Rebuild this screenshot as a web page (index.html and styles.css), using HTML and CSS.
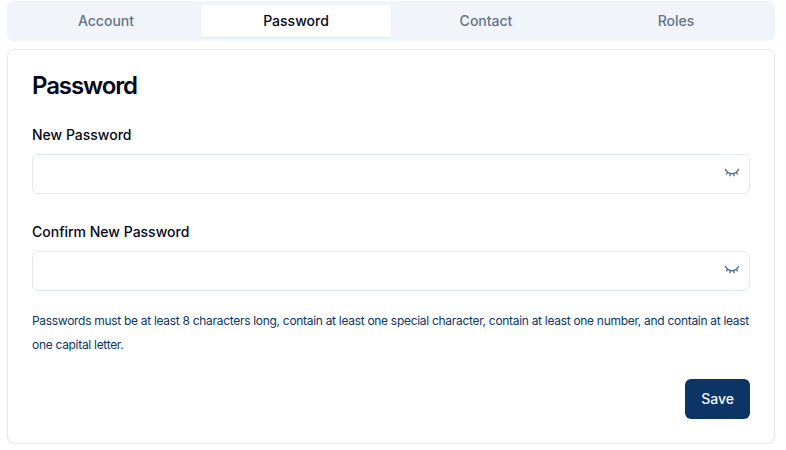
FILE: index.html
```html
<!DOCTYPE html>
<html lang="en">
<head>
  <meta charset="UTF-8">
  <title>Account Settings</title>
  <link rel="stylesheet" href="styles.css">
</head>
<body>
  <div class="settings">
    <div class="tabs">
      <button type="button" class="tab">Account</button>
      <button type="button" class="tab active">Password</button>
      <button type="button" class="tab">Contact</button>
      <button type="button" class="tab">Roles</button>
    </div>

    <form class="card">
      <h3>Password</h3>

      <div class="field">
        <label for="newPassword">New Password</label>
        <div class="input-wrap">
          <input type="password" id="newPassword">
          <svg class="eye" viewBox="0 0 16 16"><use href="#eyeClosed"/></svg>
        </div>
      </div>

      <div class="field">
        <label for="confirmPassword">Confirm New Password</label>
        <div class="input-wrap">
          <input type="password" id="confirmPassword">
          <svg class="eye" viewBox="0 0 16 16"><use href="#eyeClosed"/></svg>
        </div>
      </div>

      <p class="hint">Passwords must be at least 8 characters long, contain at least one special character, contain at least one number, and contain at least one capital letter.</p>

      <div class="actions">
        <button type="button" class="btn">Save</button>
      </div>
    </form>
  </div>

  <!-- Shared icon -->
  <svg class="icons">
    <symbol id="eyeClosed" viewBox="0 0 16 16">
      <g fill="none" stroke="currentColor" stroke-width="1.4" stroke-linecap="round">
        <path d="M1.4 7.4C2.9 10.1 5.2 11.8 8 11.8S13.1 10.1 14.6 7.4"/>
        <path d="M3.6 10.4L2.6 11.9M12.4 10.4L13.4 11.9M6.3 11.8L5.9 13.7M9.7 11.8L10.1 13.7"/>
      </g>
    </symbol>
  </svg>
</body>
</html>
```
FILE: styles.css
```css
* {
  box-sizing: border-box;
}

body {
  margin: 0;
  font-family: Inter, sans-serif;
  background: #ffffff;
  color: #020817;
}

.settings {
  width: 768px;
  margin-left: 7px;
  padding-top: 1px;
}

/* Tabs */
.tabs {
  display: grid;
  grid-template-columns: repeat(4, 1fr);
  height: 40px;
  padding: 4px;
  margin-bottom: 8px;
  border-radius: 6px;
  background: #f1f5f9;
}

.tab {
  border: none;
  border-radius: 4px;
  padding: 6px 12px;
  background: transparent;
  font-family: inherit;
  font-size: 14px;
  font-weight: 500;
  line-height: 20px;
  color: #64748b;
  cursor: pointer;
}

.tab.active {
  background: #ffffff;
  color: #020817;
  box-shadow: 0 1px 2px rgba(0, 0, 0, 0.05);
}

/* Card */
.card {
  height: 395px;
  padding: 24px;
  border: 1px solid #e5e7eb;
  border-radius: 8px;
  box-shadow: 0 1px 2px rgba(0, 0, 0, 0.05);
}

h3 {
  margin: 0 0 30px;
  font-size: 24px;
  font-weight: 600;
  line-height: 24px;
  letter-spacing: -1.1px;
}

.field {
  margin-bottom: 31px;
}

label {
  display: block;
  margin-bottom: 12px;
  font-size: 14px;
  font-weight: 500;
  line-height: 14px;
}

.input-wrap {
  position: relative;
}

input {
  display: block;
  width: 100%;
  height: 40px;
  padding: 8px 12px;
  border: 1px solid #e2e8f0;
  border-radius: 6px;
  background: #ffffff;
  font-size: 14px;
}

.eye {
  position: absolute;
  top: 8px;
  right: 10px;
  width: 16px;
  height: 16px;
  color: #64748b;
}

.hint {
  margin: -13px 0 22px;
  font-size: 12px;
  line-height: 24px;
  letter-spacing: -0.3px;
  color: #0c3464;
}

.actions {
  display: flex;
  justify-content: flex-end;
}

.btn {
  height: 40px;
  padding: 7px 16px 9px;
  border: none;
  border-radius: 6px;
  background: #0c3464;
  font-family: inherit;
  font-size: 14px;
  font-weight: 500;
  color: #f8fafc;
  cursor: pointer;
}

.icons {
  display: none;
}
```
